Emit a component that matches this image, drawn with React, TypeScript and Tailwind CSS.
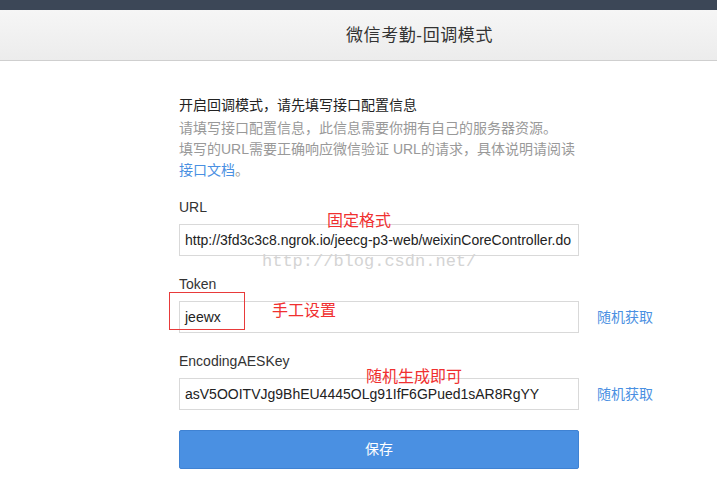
import React from 'react';

const cjk = '"Liberation Sans", "Noto Sans CJK SC", sans-serif';

const Field: React.FC<{ label: string; value: string; action?: string }> = ({ label, value, action }) => (
    <div className="mb-[18px]">
        <div className="h-5 leading-5 text-[14px] text-[#333]">{label}</div>
        <div className="mt-[7px] flex items-center">
            <div className="w-[400px] h-[32px] border border-[#d9d9d9] bg-white pl-[5px] flex items-center overflow-hidden whitespace-nowrap text-[14px] text-[#222]">
                {value}
            </div>
            {action && <a className="ml-[18px] text-[14px] text-[#4a90e2] cursor-pointer">{action}</a>}
        </div>
    </div>
);

export default function App() {
    return (
        <div className="relative w-[717px] h-[503px] bg-white overflow-hidden" style={{ fontFamily: cjk }}>
            {/* top dark strip */}
            <div className="h-[10px] bg-[#3c4757]" />

            {/* header */}
            <div className="h-[51px] border-b border-[#cfcfcf] bg-gradient-to-b from-[#f6f6f6] to-[#ececec] flex items-center justify-center pl-[122px]">
                <h1 className="text-[17px] text-[#333] tracking-[0.6px] pt-[1px]">微信考勤-回调模式</h1>
            </div>

            <div className="pl-[179px] pt-[34px]">
                <p className="text-[14px] leading-[21px] text-[#222] mb-[2px]">开启回调模式，请先填写接口配置信息</p>
                <div className="text-[14px] leading-[21px] text-[#999]">
                    <p>请填写接口配置信息，此信息需要你拥有自己的服务器资源。</p>
                    <p>填写的URL需要正确响应微信验证 URL的请求，具体说明请阅读</p>
                    <p><a className="text-[#4a90e2]">接口文档</a>。</p>
                </div>

                <div className="mt-[16px]">
                    <Field label="URL" value="http://3fd3c3c8.ngrok.io/jeecg-p3-web/weixinCoreController.do" />
                    <Field label="Token" value="jeewx" action="随机获取" />
                    <Field label="EncodingAESKey" value="asV5OOITVJg9BhEU4445OLg91IfF6GPued1sAR8RgYY" action="随机获取" />
                </div>

                <button className="mt-[2px] w-[400px] h-[39px] rounded-[2px] bg-[#4a90e2] border border-[#3f82d3] text-white text-[14px]">
                    保存
                </button>
            </div>

            {/* watermark */}
            <div className="absolute left-[262px] top-[252px] text-[17px] leading-5 text-[#d4d4d4]" style={{ fontFamily: '"Liberation Mono", monospace' }}>
                http://blog.csdn.net/
            </div>

            {/* red annotations */}
            <div className="absolute left-[327px] top-[211px] text-[16px] leading-5 text-[#f03030]">固定格式</div>
            <div className="absolute left-[272px] top-[301px] text-[16px] leading-5 text-[#f03030]">手工设置</div>
            <div className="absolute left-[366px] top-[367px] text-[16px] leading-5 text-[#f03030]">随机生成即可</div>
            <div className="absolute left-[169px] top-[292px] w-[76px] h-[38px] border border-[#e83a3a]" />
        </div>
    );
}
